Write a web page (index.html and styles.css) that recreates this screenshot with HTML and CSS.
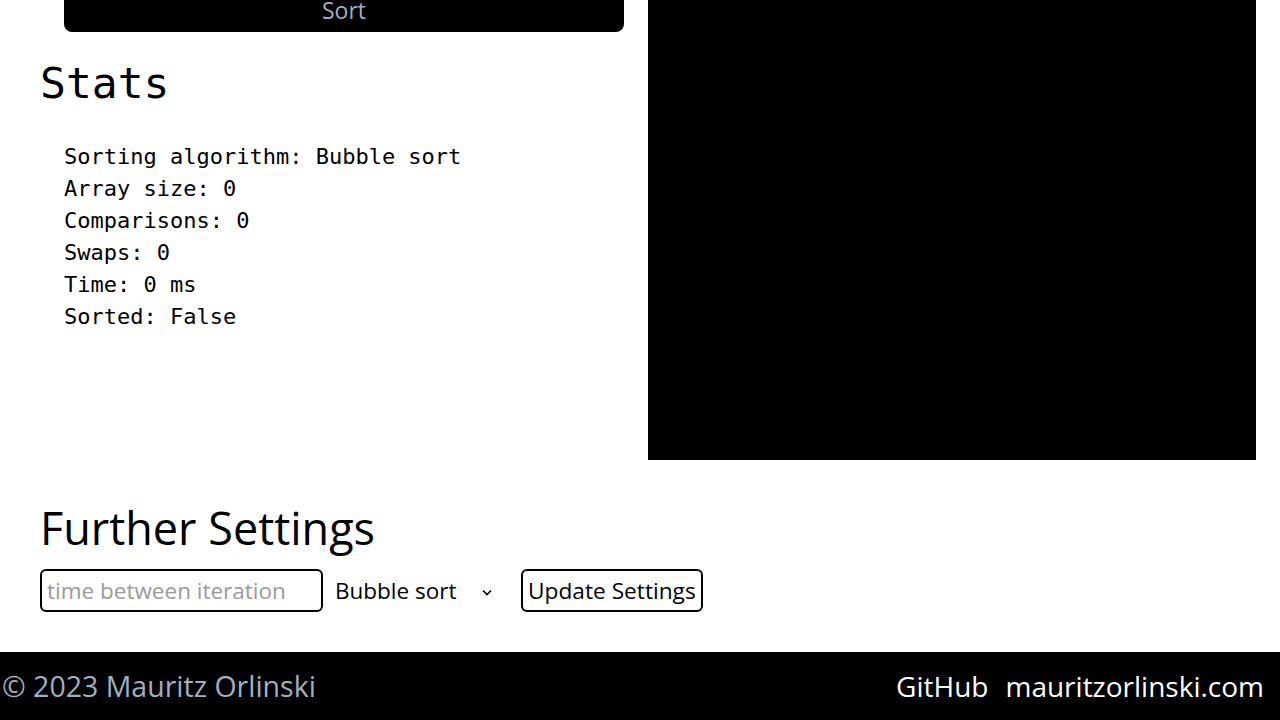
FILE: index.html
```html
<!DOCTYPE html>
<html lang="en">
<head>
<meta charset="UTF-8">
<meta name="viewport" content="width=device-width, initial-scale=1.0">
<title>Sorting Visualizer</title>
<link rel="stylesheet" href="styles.css">
</head>
<body>
<div class="page">
    <div class="main">
        <div class="left-panel">
            <button class="sort-btn">Sort</button>
            <h2 class="stats-title">Stats</h2>
            <ul class="stats-list">
                <li>Sorting algorithm: Bubble sort</li>
                <li>Array size: 0</li>
                <li>Comparisons: 0</li>
                <li>Swaps: 0</li>
                <li>Time: 0 ms</li>
                <li>Sorted: False</li>
            </ul>
        </div>
        <div class="right-panel">
            <div class="canvas"></div>
        </div>
    </div>

    <div class="settings">
        <h2 class="settings-title">Further Settings</h2>
        <div class="settings-row">
            <input type="text" class="time-input" placeholder="time between iteration">
            <div class="select-wrap">
                <select class="algo-select">
                    <option>Bubble sort</option>
                    <option>Selection sort</option>
                    <option>Insertion sort</option>
                </select>
                <svg class="chevron" width="10" height="7" viewBox="0 0 10 7">
                    <path d="M1 1.5 L5 5.5 L9 1.5" fill="none" stroke="#000" stroke-width="1.6"/>
                </svg>
            </div>
            <button class="update-btn">Update Settings</button>
        </div>
    </div>
</div>

<footer class="footer">
    <span class="copyright">&copy; 2023 Mauritz Orlinski</span>
    <div class="links">
        <a href="#">GitHub</a>
        <a href="#">mauritzorlinski.com</a>
    </div>
</footer>
</body>
</html>
```

FILE: styles.css
```css
* {
    margin: 0;
    padding: 0;
    box-sizing: border-box;
}

body {
    font-family: "Open Sans", "Noto Sans", sans-serif;
    background: #fff;
    color: #000;
    overflow: hidden;
}

.page {
    padding: 0 24px 0 40px;
}

/* TOP SECTION */
.main {
    display: grid;
    grid-template-columns: 608px 608px;
    margin-top: -12px;
}

.sort-btn {
    display: block;
    width: calc(100% - 48px);
    margin: 0 24px;
    background: #000;
    color: #a3aec2;
    border: none;
    border-radius: 8px;
    padding: 6px 0;
    font-family: "Open Sans", sans-serif;
    font-size: 23px;
    line-height: 32px;
    cursor: pointer;
}

.stats-title {
    font-family: "DejaVu Sans Mono", "Liberation Mono", monospace;
    font-weight: normal;
    font-size: 43px;
    line-height: 52px;
    margin-top: 25px;
}

.stats-list {
    list-style: none;
    padding-left: 24px;
    margin-top: 32px;
    font-family: "DejaVu Sans Mono", "Liberation Mono", monospace;
    font-size: 22px;
    line-height: 32px;
}

.canvas {
    background: #000;
    height: 472px;
}

/* SETTINGS */
.settings-title {
    font-weight: normal;
    font-size: 45px;
    line-height: 56px;
    margin-top: 40px;
}

.settings-row {
    display: flex;
    align-items: center;
    margin-top: 13px;
    margin-bottom: 40px;
}

.time-input {
    width: 283px;
    height: 43px;
    border: 2px solid #000;
    border-radius: 6px;
    padding: 0 5px;
    font-family: "Open Sans", sans-serif;
    font-size: 22.5px;
    outline: none;
}

.time-input::placeholder {
    color: #9a9a9a;
}

.select-wrap {
    position: relative;
    margin-left: 12px;
    width: 186px;
}

.algo-select {
    appearance: none;
    -webkit-appearance: none;
    border: none;
    background: transparent;
    font-family: "Open Sans", sans-serif;
    font-size: 22.5px;
    width: 100%;
    padding: 0;
    color: #000;
}

.chevron {
    position: absolute;
    right: 29px;
    top: 14px;
    pointer-events: none;
}

.update-btn {
    height: 43px;
    background: #fff;
    border: 2px solid #000;
    border-radius: 6px;
    padding: 0 5px;
    font-family: "Open Sans", sans-serif;
    font-size: 22.7px;
    color: #000;
    cursor: pointer;
}

/* FOOTER */
.footer {
    height: 68px;
    background: #000;
    display: flex;
    justify-content: space-between;
    align-items: center;
    padding: 0 16px 0 2px;
    font-size: 28px;
}

.copyright {
    color: #a3aec2;
    font-size: 28.5px;
}

.links {
    display: flex;
    gap: 17px;
}

.links a {
    color: #fff;
    text-decoration: none;
}
```
